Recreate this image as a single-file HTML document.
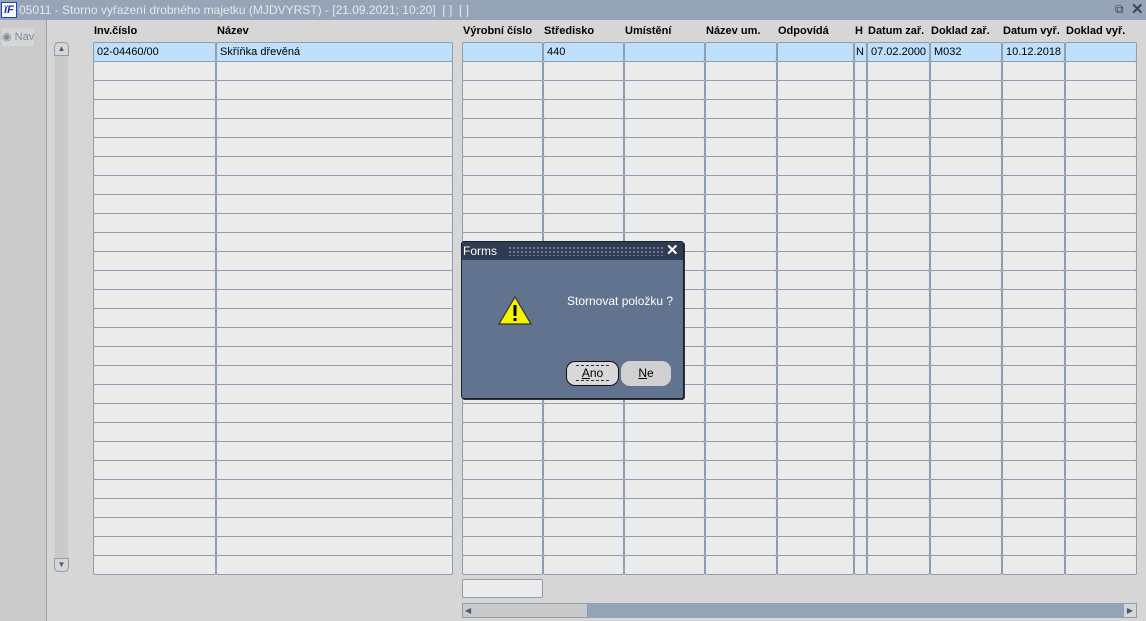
<!DOCTYPE html>
<html><head><meta charset="utf-8"><style>
body{margin:0;width:1146px;height:621px;background:#d6d6d6;position:relative;overflow:hidden;font-family:"Liberation Sans",Arial,sans-serif;font-size:11px;color:#000}
.a{position:absolute;box-sizing:border-box}
.title{left:0;top:0;width:1146px;height:20px;background:#95a4b6;color:#e4e8ee;font-size:12px;line-height:20px;padding-left:19px}
.cell{background:#ebebeb;border:1px solid #8e9db1;border-radius:2px;height:20px;line-height:18px;padding-left:3px;white-space:nowrap;overflow:hidden}
.sel{background:#bfe0fb}
.hd{font-weight:bold;top:25px;font-size:11px;white-space:nowrap}
</style></head><body>
<div class="a title">05011 - Storno vyřazení drobného majetku (MJDVYRST) - [21.09.2021; 10:20]&nbsp; [ ]&nbsp; [ ]</div>
<div class="a" style="left:1px;top:2px;width:16px;height:16px;background:#fff;border:1px solid #2040c0;color:#1030b0;font:bold italic 11px 'Liberation Sans';line-height:14px;text-align:center">ïF</div>
<div class="a" style="left:1115px;top:2px;color:#3a4656;font-size:12px">⧉</div>
<div class="a" style="left:1131px;top:0px;color:#3a4656;font-size:15px;font-weight:bold">✕</div>
<div class="a" style="left:0;top:20px;width:47px;height:601px;background:#cbcbcb;border-right:1px solid #94a3b5"></div>
<div class="a" style="left:2px;top:28px;width:32px;height:18px;background:#d6d6d6;color:#7f8a98;font-size:11px;line-height:18px;white-space:nowrap;overflow:hidden">◉ Nav</div>
<div class="a" style="left:55px;top:42px;width:13px;height:530px;background:#cacaca"></div>
<div class="a" style="left:54px;top:42px;width:15px;height:14px;border:1px solid #8d9db3;border-radius:5px 5px 0 0;background:#d6d6d6;color:#4a5a74;font-size:8px;text-align:center;line-height:12px">▲</div>
<div class="a" style="left:54px;top:558px;width:15px;height:14px;border:1px solid #8d9db3;border-radius:0 0 5px 5px;background:#d6d6d6;color:#4a5a74;font-size:8px;text-align:center;line-height:12px">▼</div>
<div id="g"></div>
<div class="a cell" style="left:462px;top:579px;width:81px;height:19px"></div>
<div class="a" style="left:462px;top:603px;width:675px;height:15px;background:#94a4b6;border-radius:2px"></div>
<div class="a" style="left:462px;top:603px;width:126px;height:15px;background:#cacaca;border:1px solid #8d9db3;color:#4a5a74;font-size:8px;line-height:13px;padding-left:2px">◀</div>
<div class="a" style="left:1123px;top:603px;width:14px;height:15px;background:#d6d6d6;border:1px solid #8d9db3;color:#4a5a74;font-size:8px;line-height:13px;text-align:center">▶</div>
<div class="a" style="left:461px;top:241px;width:223px;height:158px;background:#627390;border:1px solid #1a2230;border-radius:3px;box-shadow:1px 1px 0 #333"></div>
<div class="a" style="left:462px;top:242px;width:221px;height:18px;background:#2f3b52;color:#fff;font-size:12px;line-height:18px;padding-left:1px">Forms</div>
<div class="a" style="left:508px;top:246px;width:155px;height:10px;background-image:radial-gradient(#8090a8 0.8px,transparent 1px);background-size:4px 4px"></div>
<div class="a" style="left:666px;top:241px;color:#fff;font-size:15px;font-weight:bold">✕</div>
<svg class="a" style="left:497px;top:295px" width="36" height="32"><polygon points="18,2 34,29 2,29" fill="#f4f400" stroke="#333" stroke-width="1.2"/><rect x="16.5" y="10" width="3" height="11" fill="#000"/><rect x="16.5" y="23" width="3" height="3" fill="#000"/></svg>
<div class="a" style="left:567px;top:294px;color:#fff;font-size:12px">Stornovat položku ?</div>
<div class="a" style="left:566px;top:361px;width:53px;height:25px;background:#d8d8d8;border:1px solid #111;border-radius:9px;text-align:center;line-height:23px;font-size:12px"><span style="border-top:1px dashed #333;border-bottom:1px dashed #333;padding:0 6px"><u>A</u>no</span></div>
<div class="a" style="left:621px;top:361px;width:50px;height:25px;background:#d0d0d0;border-radius:9px;text-align:center;line-height:25px;font-size:12px"><u>N</u>e</div>
<script>
var cols=[[93,123,'Inv.číslo'],[216,237,'Název'],[462,81,'Výrobní číslo'],[543,81,'Středisko'],[624,81,'Umístění'],[705,72,'Název um.'],[777,77,'Odpovídá'],[854,13,'H'],[867,63,'Datum zař.'],[930,72,'Doklad zař.'],[1002,63,'Datum vyř.'],[1065,72,'Doklad vyř.']];
var d=['02-04460/00','Skříňka dřevěná','','440','','','','N','07.02.2000','M032','10.12.2018',''];
var h='';
cols.forEach(function(c,i){h+='<div class="a hd" style="left:'+(c[0]+1)+'px">'+c[2]+'</div>';
for(var r=0;r<28;r++){h+='<div class="a cell'+(r==0?' sel':'')+'" style="left:'+c[0]+'px;top:'+(42+r*19)+'px;width:'+c[1]+'px;'+(i==7?'padding-left:1px;':'')+'">'+(r==0?d[i]:'')+'</div>';}});
document.getElementById('g').innerHTML=h;
</script>
</body></html>
